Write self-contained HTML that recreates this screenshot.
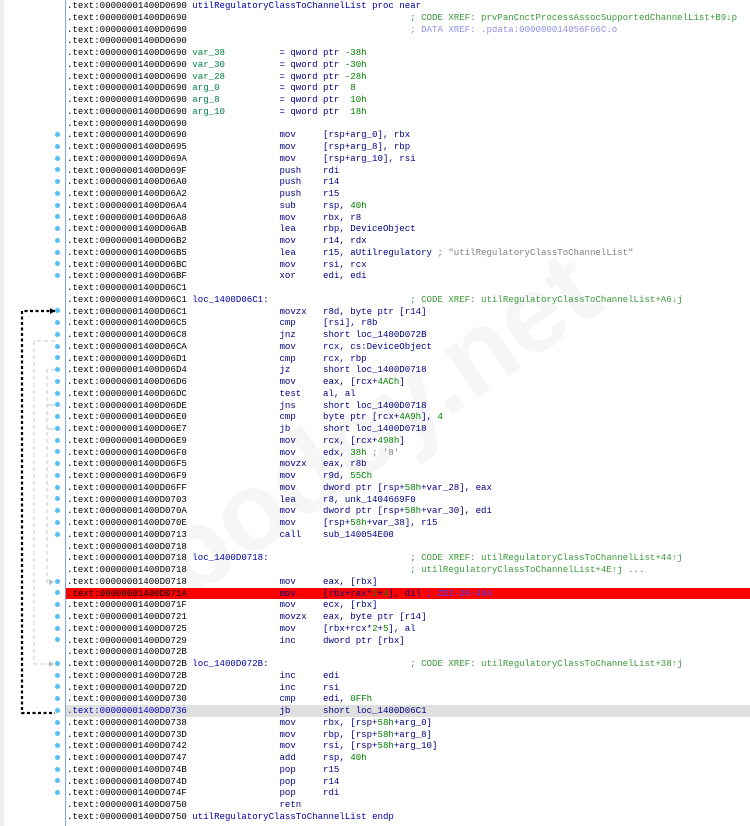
<!DOCTYPE html>
<html><head><meta charset="utf-8">
<style>
html,body{margin:0;padding:0;background:#fff;width:750px;height:826px;overflow:hidden;position:relative}
#g{position:absolute;left:0;top:0;width:4px;height:826px;background:#eeeeee}
#vl{position:absolute;left:65px;top:0;width:1px;height:826px;background:#7aa7d8}
#list{position:absolute;left:66px;top:0;right:0;font-family:"Liberation Mono",monospace;font-size:9.08px;}
.r{position:relative;height:11.75px;line-height:11.75px;white-space:pre;}
.r span{position:absolute;top:0}
.a{left:1px;color:#000}
.l{left:calc(1px + 23ch)}
.m{left:calc(1px + 39ch);color:#000080}
.o{left:calc(1px + 47ch);color:#000080}
.c{left:calc(1px + 63ch);color:#3a9a3a}
.n{color:#008000}
.v{color:#008040}
.lb{color:#0000a0}
.d{color:#9090e8}
.s{color:#808080}
.red{background:#ff0000}
.hl{background:#e0e0e0}
.hl .a{color:#0000c0}
.dot{position:absolute;left:55px;width:5px;height:5px;border-radius:50%;background:#55c0f5}
#wm{position:absolute;left:120px;top:360px;font-family:"Liberation Sans",sans-serif;font-weight:bold;font-size:110px;color:rgba(0,0,0,0.035);transform:rotate(-35deg);transform-origin:center;white-space:nowrap}
</style></head><body>
<div id="g"></div>
<div id="wm">bodey.net</div>
<svg width="66" height="826" style="position:absolute;left:0;top:0">
<path d="M55 311 H22 V713 H55" fill="none" stroke="#000" stroke-width="2.2" stroke-dasharray="3,2.5"/>
<polygon points="55,311 50,308 50,314" fill="#000"/>
<path d="M55 341 H34 V664 H50" fill="none" stroke="#c8c8c8" stroke-width="1" stroke-dasharray="4,3"/>
<polygon points="54,664 49,661 49,667" fill="#bbb"/>
<path d="M55 370 H47 V582 H50" fill="none" stroke="#c8c8c8" stroke-width="1" stroke-dasharray="4,3"/>
<path d="M47 405 H55 M47 429 H55" fill="none" stroke="#c8c8c8" stroke-width="1"/>
<polygon points="54,582 49,579 49,585" fill="#bbb"/>
</svg>
<div id="vl"></div>
<div id="list">
<div class="r"><span class="a">.text:00000001400D0690</span><span class="l lb">utilRegulatoryClassToChannelList proc near</span></div>
<div class="r"><span class="a">.text:00000001400D0690</span><span class="c">; CODE XREF: prvPanCnctProcessAssocSupportedChannelList+B9↓p</span></div>
<div class="r"><span class="a">.text:00000001400D0690</span><span class="c d">; DATA XREF: .pdata:000000014056F66C↓o</span></div>
<div class="r"><span class="a">.text:00000001400D0690</span></div>
<div class="r"><span class="a">.text:00000001400D0690</span><span class="l v">var_38</span><span class="m">= qword ptr <span style="position:static" class="n">-38h</span></span></div>
<div class="r"><span class="a">.text:00000001400D0690</span><span class="l v">var_30</span><span class="m">= qword ptr <span style="position:static" class="n">-30h</span></span></div>
<div class="r"><span class="a">.text:00000001400D0690</span><span class="l v">var_28</span><span class="m">= qword ptr <span style="position:static" class="n">-28h</span></span></div>
<div class="r"><span class="a">.text:00000001400D0690</span><span class="l v">arg_0</span><span class="m">= qword ptr  <span style="position:static" class="n">8</span></span></div>
<div class="r"><span class="a">.text:00000001400D0690</span><span class="l v">arg_8</span><span class="m">= qword ptr  <span style="position:static" class="n">10h</span></span></div>
<div class="r"><span class="a">.text:00000001400D0690</span><span class="l v">arg_10</span><span class="m">= qword ptr  <span style="position:static" class="n">18h</span></span></div>
<div class="r"><span class="a">.text:00000001400D0690</span></div>
<div class="r"><span class="a">.text:00000001400D0690</span><span class="m">mov</span><span class="o">[rsp+arg_0], rbx</span></div>
<div class="r"><span class="a">.text:00000001400D0695</span><span class="m">mov</span><span class="o">[rsp+arg_8], rbp</span></div>
<div class="r"><span class="a">.text:00000001400D069A</span><span class="m">mov</span><span class="o">[rsp+arg_10], rsi</span></div>
<div class="r"><span class="a">.text:00000001400D069F</span><span class="m">push</span><span class="o">rdi</span></div>
<div class="r"><span class="a">.text:00000001400D06A0</span><span class="m">push</span><span class="o">r14</span></div>
<div class="r"><span class="a">.text:00000001400D06A2</span><span class="m">push</span><span class="o">r15</span></div>
<div class="r"><span class="a">.text:00000001400D06A4</span><span class="m">sub</span><span class="o">rsp, <span style="position:static" class="n">40h</span></span></div>
<div class="r"><span class="a">.text:00000001400D06A8</span><span class="m">mov</span><span class="o">rbx, r8</span></div>
<div class="r"><span class="a">.text:00000001400D06AB</span><span class="m">lea</span><span class="o">rbp, DeviceObject</span></div>
<div class="r"><span class="a">.text:00000001400D06B2</span><span class="m">mov</span><span class="o">r14, rdx</span></div>
<div class="r"><span class="a">.text:00000001400D06B5</span><span class="m">lea</span><span class="o">r15, aUtilregulatory <span style="position:static" class="s">; "utilRegulatoryClassToChannelList"</span></span></div>
<div class="r"><span class="a">.text:00000001400D06BC</span><span class="m">mov</span><span class="o">rsi, rcx</span></div>
<div class="r"><span class="a">.text:00000001400D06BF</span><span class="m">xor</span><span class="o">edi, edi</span></div>
<div class="r"><span class="a">.text:00000001400D06C1</span></div>
<div class="r"><span class="a">.text:00000001400D06C1</span><span class="l lb">loc_1400D06C1:</span><span class="c">; CODE XREF: utilRegulatoryClassToChannelList+A6↓j</span></div>
<div class="r"><span class="a">.text:00000001400D06C1</span><span class="m">movzx</span><span class="o">r8d, byte ptr [r14]</span></div>
<div class="r"><span class="a">.text:00000001400D06C5</span><span class="m">cmp</span><span class="o">[rsi], r8b</span></div>
<div class="r"><span class="a">.text:00000001400D06C8</span><span class="m">jnz</span><span class="o">short loc_1400D072B</span></div>
<div class="r"><span class="a">.text:00000001400D06CA</span><span class="m">mov</span><span class="o">rcx, cs:DeviceObject</span></div>
<div class="r"><span class="a">.text:00000001400D06D1</span><span class="m">cmp</span><span class="o">rcx, rbp</span></div>
<div class="r"><span class="a">.text:00000001400D06D4</span><span class="m">jz</span><span class="o">short loc_1400D0718</span></div>
<div class="r"><span class="a">.text:00000001400D06D6</span><span class="m">mov</span><span class="o">eax, [rcx+<span style="position:static" class="n">4ACh</span>]</span></div>
<div class="r"><span class="a">.text:00000001400D06DC</span><span class="m">test</span><span class="o">al, al</span></div>
<div class="r"><span class="a">.text:00000001400D06DE</span><span class="m">jns</span><span class="o">short loc_1400D0718</span></div>
<div class="r"><span class="a">.text:00000001400D06E0</span><span class="m">cmp</span><span class="o">byte ptr [rcx+<span style="position:static" class="n">4A9h</span>], <span style="position:static" class="n">4</span></span></div>
<div class="r"><span class="a">.text:00000001400D06E7</span><span class="m">jb</span><span class="o">short loc_1400D0718</span></div>
<div class="r"><span class="a">.text:00000001400D06E9</span><span class="m">mov</span><span class="o">rcx, [rcx+<span style="position:static" class="n">498h</span>]</span></div>
<div class="r"><span class="a">.text:00000001400D06F0</span><span class="m">mov</span><span class="o">edx, <span style="position:static" class="n">38h</span> <span style="position:static" class="s">; '8'</span></span></div>
<div class="r"><span class="a">.text:00000001400D06F5</span><span class="m">movzx</span><span class="o">eax, r8b</span></div>
<div class="r"><span class="a">.text:00000001400D06F9</span><span class="m">mov</span><span class="o">r9d, <span style="position:static" class="n">55Ch</span></span></div>
<div class="r"><span class="a">.text:00000001400D06FF</span><span class="m">mov</span><span class="o">dword ptr [rsp+<span style="position:static" class="n">58h</span>+var_28], eax</span></div>
<div class="r"><span class="a">.text:00000001400D0703</span><span class="m">lea</span><span class="o">r8, unk_1404669F0</span></div>
<div class="r"><span class="a">.text:00000001400D070A</span><span class="m">mov</span><span class="o">dword ptr [rsp+<span style="position:static" class="n">58h</span>+var_30], edi</span></div>
<div class="r"><span class="a">.text:00000001400D070E</span><span class="m">mov</span><span class="o">[rsp+<span style="position:static" class="n">58h</span>+var_38], r15</span></div>
<div class="r"><span class="a">.text:00000001400D0713</span><span class="m">call</span><span class="o">sub_140054E00</span></div>
<div class="r"><span class="a">.text:00000001400D0718</span></div>
<div class="r"><span class="a">.text:00000001400D0718</span><span class="l lb">loc_1400D0718:</span><span class="c">; CODE XREF: utilRegulatoryClassToChannelList+44↑j</span></div>
<div class="r"><span class="a">.text:00000001400D0718</span><span class="c">; utilRegulatoryClassToChannelList+4E↑j ...</span></div>
<div class="r"><span class="a">.text:00000001400D0718</span><span class="m">mov</span><span class="o">eax, [rbx]</span></div>
<div class="r red"><span class="a">.text:00000001400D071A</span><span class="m">mov</span><span class="o">[rbx+rax*<span style="position:static" class="n">2</span>+<span style="position:static" class="n">4</span>], dil <span style="position:static;color:#4040ff">; ZDI-20-494</span></span></div>
<div class="r"><span class="a">.text:00000001400D071F</span><span class="m">mov</span><span class="o">ecx, [rbx]</span></div>
<div class="r"><span class="a">.text:00000001400D0721</span><span class="m">movzx</span><span class="o">eax, byte ptr [r14]</span></div>
<div class="r"><span class="a">.text:00000001400D0725</span><span class="m">mov</span><span class="o">[rbx+rcx*<span style="position:static" class="n">2</span>+<span style="position:static" class="n">5</span>], al</span></div>
<div class="r"><span class="a">.text:00000001400D0729</span><span class="m">inc</span><span class="o">dword ptr [rbx]</span></div>
<div class="r"><span class="a">.text:00000001400D072B</span></div>
<div class="r"><span class="a">.text:00000001400D072B</span><span class="l lb">loc_1400D072B:</span><span class="c">; CODE XREF: utilRegulatoryClassToChannelList+38↑j</span></div>
<div class="r"><span class="a">.text:00000001400D072B</span><span class="m">inc</span><span class="o">edi</span></div>
<div class="r"><span class="a">.text:00000001400D072D</span><span class="m">inc</span><span class="o">rsi</span></div>
<div class="r"><span class="a">.text:00000001400D0730</span><span class="m">cmp</span><span class="o">edi, <span style="position:static" class="n">0FFh</span></span></div>
<div class="r hl"><span class="a">.text:00000001400D0736</span><span class="m">jb</span><span class="o">short loc_1400D06C1</span></div>
<div class="r"><span class="a">.text:00000001400D0738</span><span class="m">mov</span><span class="o">rbx, [rsp+<span style="position:static" class="n">58h</span>+arg_0]</span></div>
<div class="r"><span class="a">.text:00000001400D073D</span><span class="m">mov</span><span class="o">rbp, [rsp+<span style="position:static" class="n">58h</span>+arg_8]</span></div>
<div class="r"><span class="a">.text:00000001400D0742</span><span class="m">mov</span><span class="o">rsi, [rsp+<span style="position:static" class="n">58h</span>+arg_10]</span></div>
<div class="r"><span class="a">.text:00000001400D0747</span><span class="m">add</span><span class="o">rsp, <span style="position:static" class="n">40h</span></span></div>
<div class="r"><span class="a">.text:00000001400D074B</span><span class="m">pop</span><span class="o">r15</span></div>
<div class="r"><span class="a">.text:00000001400D074D</span><span class="m">pop</span><span class="o">r14</span></div>
<div class="r"><span class="a">.text:00000001400D074F</span><span class="m">pop</span><span class="o">rdi</span></div>
<div class="r"><span class="a">.text:00000001400D0750</span><span class="m">retn</span></div>
<div class="r"><span class="a">.text:00000001400D0750</span><span class="l lb">utilRegulatoryClassToChannelList endp</span></div>
</div>
<div style="position:absolute;left:0;top:0">
<div class="dot" style="top:132px"></div><div class="dot" style="top:144px"></div><div class="dot" style="top:156px"></div><div class="dot" style="top:167px"></div><div class="dot" style="top:179px"></div><div class="dot" style="top:191px"></div><div class="dot" style="top:203px"></div><div class="dot" style="top:214px"></div><div class="dot" style="top:226px"></div><div class="dot" style="top:238px"></div><div class="dot" style="top:250px"></div><div class="dot" style="top:261px"></div><div class="dot" style="top:273px"></div>
<div class="dot" style="top:308px"></div><div class="dot" style="top:320px"></div><div class="dot" style="top:332px"></div><div class="dot" style="top:344px"></div><div class="dot" style="top:355px"></div><div class="dot" style="top:367px"></div><div class="dot" style="top:379px"></div><div class="dot" style="top:391px"></div><div class="dot" style="top:402px"></div><div class="dot" style="top:414px"></div><div class="dot" style="top:426px"></div><div class="dot" style="top:438px"></div><div class="dot" style="top:449px"></div><div class="dot" style="top:461px"></div><div class="dot" style="top:473px"></div><div class="dot" style="top:485px"></div><div class="dot" style="top:496px"></div><div class="dot" style="top:508px"></div><div class="dot" style="top:520px"></div><div class="dot" style="top:532px"></div>
<div class="dot" style="top:579px"></div><div class="dot" style="top:590px"></div><div class="dot" style="top:602px"></div><div class="dot" style="top:614px"></div><div class="dot" style="top:626px"></div><div class="dot" style="top:637px"></div>
<div class="dot" style="top:661px"></div><div class="dot" style="top:673px"></div><div class="dot" style="top:684px"></div><div class="dot" style="top:696px"></div><div class="dot" style="top:708px"></div><div class="dot" style="top:720px"></div><div class="dot" style="top:731px"></div><div class="dot" style="top:743px"></div><div class="dot" style="top:755px"></div><div class="dot" style="top:767px"></div><div class="dot" style="top:778px"></div><div class="dot" style="top:790px"></div>
</div>
</body></html>
